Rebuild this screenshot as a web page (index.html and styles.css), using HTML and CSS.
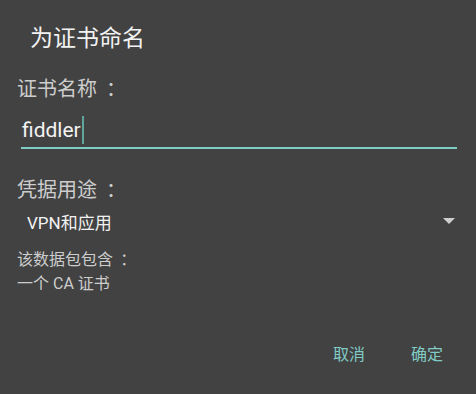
FILE: index.html
```html
<!DOCTYPE html>
<html lang="zh-CN">
<head>
    <meta charset="UTF-8">
    <title>为证书命名</title>
    <link rel="stylesheet" href="styles.css">
</head>
<body>
    <div class="dialog">
        <div class="dialog-title">为证书命名</div>

        <div class="field-label">证书名称<span class="colon">：</span></div>
        <div class="text-input">
            <span class="input-value">fiddler</span><span class="caret"></span>
        </div>

        <div class="field-label usage-label">凭据用途<span class="colon">：</span></div>
        <div class="spinner">
            <span class="spinner-value">VPN和应用</span>
            <span class="spinner-arrow"></span>
        </div>

        <div class="contents">
            <p>该数据包包含<span class="colon">：</span></p>
            <p>一个 CA 证书</p>
        </div>

        <div class="actions">
            <button class="action-btn">取消</button>
            <button class="action-btn">确定</button>
        </div>
    </div>
</body>
</html>
```

FILE: styles.css
```css
body {
    margin: 0;
    background-color: #424242;
    font-family: Roboto, "Noto Sans CJK SC", sans-serif;
    color: #cfcfcf;
}

.dialog {
    width: 476px;
    height: 394px;
    box-sizing: border-box;
    padding: 24px 19px 0 17px;
}

.dialog-title {
    font-size: 23px;
    line-height: 30px;
    color: #f2f2f2;
    padding-left: 13px;
}

.field-label {
    font-size: 20px;
    line-height: 28px;
    margin-top: 21px;
    color: #cdcdcd;
}

/* the device draws the full-width colon centred */
.colon {
    padding-left: 0.45em;
}

.text-input {
    margin: 9px 0 0 4px;
    height: 35px;
    display: flex;
    align-items: center;
    border-bottom: 2px solid #80cbc4;
}

.input-value {
    font-size: 21px;
    color: #f2f2f2;
    padding-left: 1px;
}

.caret {
    width: 2px;
    height: 28px;
    margin-left: 1px;
    background-color: #5fa59d;
}

.usage-label {
    margin-top: 27px;
}

.spinner {
    display: flex;
    align-items: center;
    justify-content: space-between;
    height: 26px;
    margin-top: 4px;
    padding-left: 10px;
}

.spinner-value {
    font-size: 17px;
    color: #f2f2f2;
}

.spinner-arrow {
    width: 0;
    height: 0;
    margin-right: 2px;
    border-left: 6px solid transparent;
    border-right: 6px solid transparent;
    border-top: 6px solid #cfcfcf;
}

.contents {
    margin-top: 14px;
}

.contents p {
    margin: 0;
    font-size: 16px;
    line-height: 24px;
    color: #cdcdcd;
}

.actions {
    display: flex;
    justify-content: flex-end;
    gap: 46px;
    margin-top: 45px;
    padding-right: 14px;
}

.action-btn {
    border: none;
    background: none;
    padding: 0;
    font-family: inherit;
    font-size: 16px;
    color: #80cbc4;
    cursor: pointer;
}
```
